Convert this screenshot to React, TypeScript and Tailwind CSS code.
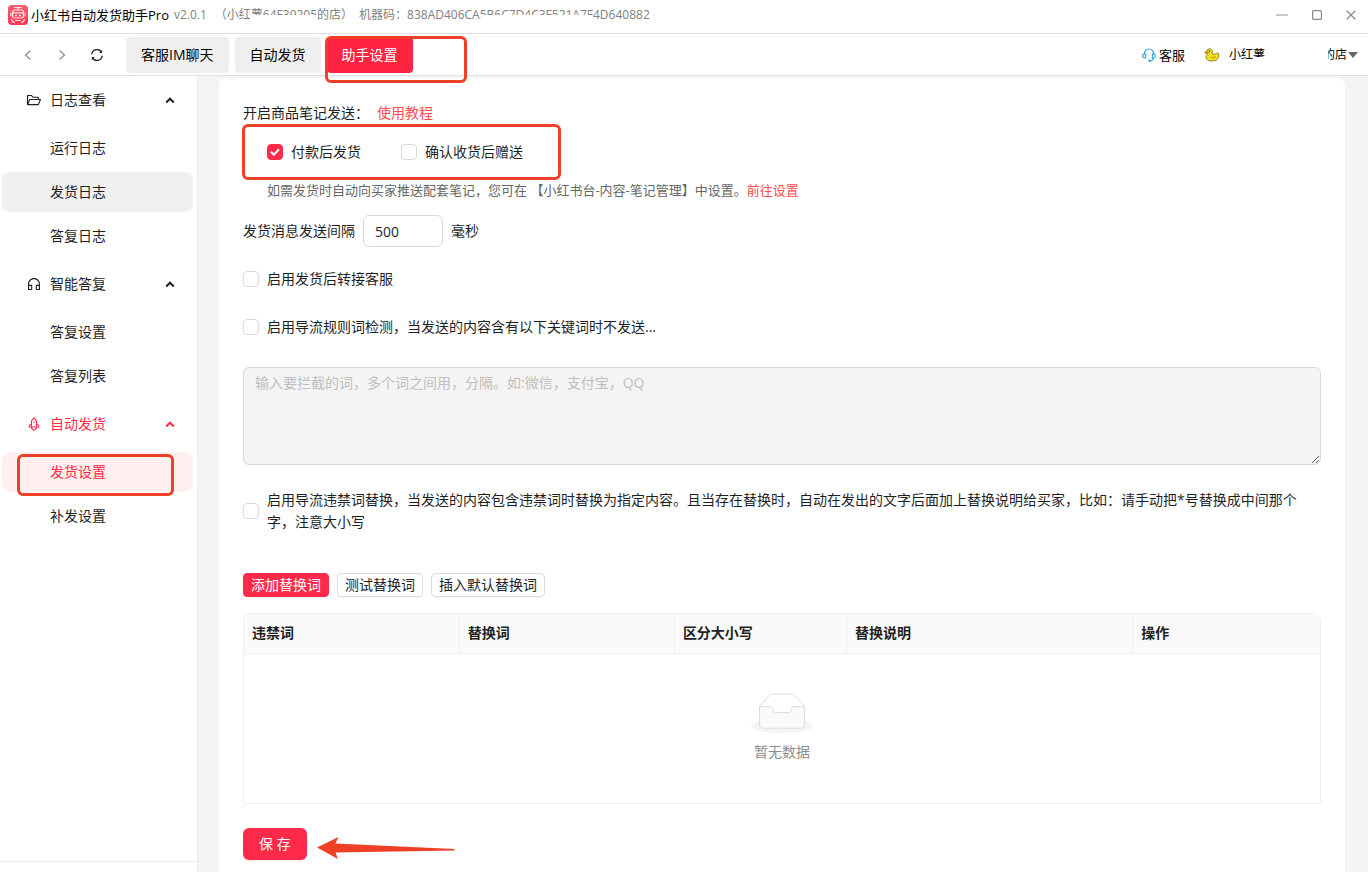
import React, { useState } from "react";
import {
  AiOutlineCustomerService,
  AiOutlineFolderOpen,
  AiOutlineRocket,
} from "react-icons/ai";

const menu = [
  {
    title: "日志查看",
    icon: AiOutlineFolderOpen,
    items: ["运行日志", "发货日志", "答复日志"],
  },
  {
    title: "智能答复",
    icon: AiOutlineCustomerService,
    items: ["答复设置", "答复列表"],
  },
  {
    title: "自动发货",
    icon: AiOutlineRocket,
    items: ["发货设置", "补发设置"],
  },
];

const columns = [
  { label: "违禁词", width: "w-[20%]" },
  { label: "替换词", width: "w-[20%]" },
  { label: "区分大小写", width: "w-[16%]" },
  { label: "替换说明", width: "w-[26.6%]" },
  { label: "操作", width: "w-[17.4%]" },
];

function itemClass(label: string) {
  if (label === "发货设置") return "bg-[#fff0ef] text-[#ff2a4a]";
  if (label === "发货日志") return "bg-[#f0f0f0]";
  return "hover:bg-[#f5f5f5]";
}

function Logo() {
  return (
    <svg width="20" height="20" viewBox="0 0 20 20" aria-hidden="true">
      <defs>
        <linearGradient id="logo-bg" x1="0" y1="0" x2="0" y2="1">
          <stop offset="0" stopColor="#ff5e70" />
          <stop offset="1" stopColor="#fb3350" />
        </linearGradient>
      </defs>
      <rect width="20" height="20" rx="4" fill="url(#logo-bg)" />
      <g fill="none" stroke="#ffe3e6" strokeWidth="1.2" strokeLinecap="round">
        <path d="M6.500 2.500h7M10 2.500v2.500" />
        <rect x="4.600" y="5" width="10.800" height="8" rx="2" />
        <path d="M5 7.800h10M2.900 8v3M17.100 8v3" />
        <path d="M3.500 14.500c.5 1.800 1.600 2.800 3 3.200M16.500 14.500c-.5 1.800-1.600 2.800-3 3.200M7.500 15.500h5" />
      </g>
      <circle cx="8" cy="10.400" r="1" fill="#fff" />
      <circle cx="12" cy="10.400" r="1" fill="#fff" />
    </svg>
  );
}

function Duck() {
  return (
    <svg width="16" height="16" viewBox="0 0 16 16" aria-hidden="true">
      <path
        d="M3 4.200C3 2.500 4.300 1.800 5.600 1.800c1.800 0 3 1.300 2.800 3-.1 1-.6 1.500-.2 2 1.300.8 3.900.4 5.900-1.200.8 1 .9 3.600.2 5.200-.9 2.200-3.200 3.200-6.400 3.200-3.800 0-5.700-1.400-5.900-3.600-.1-1.400.6-2.300 1.700-2.900"
        fill="#f5de18"
        stroke="#857a33"
        strokeWidth=".9"
      />
      <path d="M.8 5 3 4.200l1.300 1.600-.9 1.200-2.200-.6z" fill="#f08a24" stroke="#8f6f2a" strokeWidth=".6" />
      <circle cx="5.400" cy="4.200" r=".7" fill="#3b3412" />
      <path d="M7 10c1.500 1.400 3.800 1.200 4.500-1" fill="none" stroke="#a08a18" strokeWidth="1" />
    </svg>
  );
}

function Headset() {
  return (
    <svg width="14" height="14" viewBox="0 0 14 14" fill="none" stroke="#35a4e4" strokeWidth="1.200" aria-hidden="true">
      <path d="M2.300 6.200C2.300 3.200 4.200 1 7 1s4.700 2.200 4.700 5.200" />
      <path d="M3.600 6.200H2.200C1.300 6.200.7 6.900.7 8s.6 1.800 1.500 1.800h1.400zM10.400 6.200h1.400c.9 0 1.500.7 1.500 1.800s-.6 1.800-1.500 1.800h-1.400z" />
      <path d="M11.500 10c-.3 1.800-1.500 2.800-3 2.900" />
      <circle cx="7.600" cy="12.800" r=".7" fill="#35a4e4" />
    </svg>
  );
}

function EmptyBox() {
  return (
    <svg width="64" height="40" viewBox="0 0 64 41" aria-hidden="true">
      <g transform="translate(0 1)" fill="none" fillRule="evenodd">
        <ellipse fill="#f5f5f5" cx="32" cy="33" rx="32" ry="7" />
        <g fillRule="nonzero" stroke="#d9d9d9">
          <path d="M55 12.760 44.854 1.258C44.367.474 43.656 0 42.907 0H21.093c-.749 0-1.460.474-1.947 1.257L9 12.761V22h46v-9.240z" />
          <path
            d="M41.613 15.931c0-1.605.994-2.930 2.227-2.931H55v18.137C55 33.260 53.680 35 52.050 35h-40.100C10.320 35 9 33.259 9 31.137V13h11.160c1.233 0 2.227 1.323 2.227 2.928v.022c0 1.605 1.005 2.901 2.237 2.901h14.752c1.232 0 2.237-1.308 2.237-2.913v-.007z"
            fill="#fafafa"
          />
        </g>
      </g>
    </svg>
  );
}

// red hand-marked frame laid over the part of the page it points out
function Mark({ className }: { className: string }) {
  return (
    <div
      aria-hidden="true"
      className={`pointer-events-none absolute z-10 rounded-md border-3 border-[#ee4026] ${className}`}
    />
  );
}

function Check({
  children,
  defaultChecked = false,
}: {
  children: React.ReactNode;
  defaultChecked?: boolean;
}) {
  return (
    <label className="flex cursor-pointer items-center gap-2">
      <span className="grid size-4 shrink-0">
        <input
          type="checkbox"
          defaultChecked={defaultChecked}
          className="peer col-start-1 row-start-1 size-4 appearance-none rounded border border-[#d9d9d9] bg-white checked:border-[#ff2a4a] checked:bg-[#ff2a4a]"
        />
        <svg
          viewBox="0 0 16 16"
          className="pointer-events-none col-start-1 row-start-1 hidden size-4 peer-checked:block"
          fill="none"
          stroke="#fff"
          strokeWidth="2"
          aria-hidden="true"
        >
          <path d="m3.800 7.800 3 3 5.200-5.600" />
        </svg>
      </span>
      <span>{children}</span>
    </label>
  );
}

function TitleBar() {
  return (
    <header className="flex h-[34px] shrink-0 items-center border-b border-[#e0e0e0] pr-3 pl-2 pb-1">
      <Logo />
      <h1 className="ml-[3px] text-[13px] text-black">小红书自动发货助手Pro</h1>
      <div className="ml-[5px] flex text-xs whitespace-nowrap text-[#808080]">
        <span>v2.0.1</span>
        <span className="relative ml-2">
          （小红薯64F39205的店）
          <span className="absolute top-[8px] left-[35px] h-3 w-[67px] bg-white" />
        </span>
        <span className="relative ml-[6px]">
          机器码：838AD406CA5B6C7D4C3F521A7F4D640882
          <span className="absolute top-[8px] right-[59px] h-3 w-[110px] bg-white" />
        </span>
      </div>
      <div className="ml-auto flex items-center gap-6 text-[#8a8a8a]">
        <button type="button" aria-label="最小化">
          <svg width="12" height="12" viewBox="0 0 12 12" stroke="#b0b0b0" strokeWidth="1.400">
            <path d="M0 6h12" />
          </svg>
        </button>
        <button type="button" aria-label="最大化">
          <svg width="10" height="10" viewBox="0 0 10 10" fill="none" stroke="currentColor" strokeWidth="1.200">
            <rect x=".6" y=".6" width="8.800" height="8.800" rx="1" />
          </svg>
        </button>
        <button type="button" aria-label="关闭">
          <svg width="10" height="10" viewBox="0 0 10 10" fill="none" stroke="currentColor" strokeWidth="1.300">
            <path d="m.7.700 8.600 8.600M9.300.7.700 9.300" />
          </svg>
        </button>
      </div>
    </header>
  );
}

function Toolbar() {
  return (
    <div className="flex h-[42px] shrink-0 items-center border-b border-[#e0e0e0] pr-[10px] pl-[22px] text-black">
      <div className="flex items-center gap-[22px] text-[#8c8c8c]">
        <button type="button" aria-label="后退">
          <svg width="12" height="12" viewBox="0 0 12 12" fill="none" stroke="currentColor" strokeWidth="1.200">
            <path d="M8.500 1.500 3.500 6l5 4.500" />
          </svg>
        </button>
        <button type="button" aria-label="前进">
          <svg width="12" height="12" viewBox="0 0 12 12" fill="none" stroke="currentColor" strokeWidth="1.200">
            <path d="m3.500 1.500 5 4.500-5 4.500" />
          </svg>
        </button>
        <button type="button" aria-label="刷新" className="text-[#222222]">
          <svg width="14" height="14" viewBox="0 0 14 14" fill="none" stroke="currentColor" strokeWidth="1.300">
            <path d="M1.800 6.200A5.200 5.200 0 0 1 11.700 4.600M12.200 7.800A5.200 5.200 0 0 1 2.300 9.400" />
            <path d="m12.300 2-.3 3.300-2.900-.7zM1.700 12 2 8.700l2.900.7z" fill="currentColor" stroke="none" />
          </svg>
        </button>
      </div>
      <div className="ml-[22px] flex gap-[6px]">
        <button type="button" className="h-9 rounded bg-[#efefef] px-[15px]">
          客服IM聊天
        </button>
        <button type="button" className="h-9 rounded bg-[#efefef] px-[15px]">
          自动发货
        </button>
        <div className="relative">
          <button type="button" className="h-9 rounded bg-[#ff2442] px-[15px] text-white">
            助手设置
          </button>
          <Mark className="-top-px -left-[2px] h-[47px] w-[142px]" />
        </div>
      </div>
      <div className="ml-auto flex items-center pt-[2px] text-xs">
        <a href="#" className="flex items-center gap-[3px] text-[13px]">
          <Headset />
          客服
        </a>
        <button type="button" className="ml-[19px] flex items-center">
          <Duck />
          <span className="relative ml-[9px]">
            小红薯
            <span className="absolute right-0 bottom-0 h-[6px] w-3 bg-white" />
          </span>
          <span className="relative ml-[58px] whitespace-nowrap">
            的店
            <span className="absolute top-0 left-0 h-full w-[5px] bg-white" />
          </span>
          <svg width="10" height="6" viewBox="0 0 10 6" className="ml-px" fill="#666666" aria-hidden="true">
            <path d="M0 0h10L5 6z" />
          </svg>
        </button>
      </div>
    </div>
  );
}

function Sidebar() {
  return (
    <aside className="flex w-[198px] shrink-0 flex-col border-r border-[#ececec]">
      <nav className="flex flex-1 flex-col gap-2 py-1 pr-1 pl-[2px]">
        {menu.map(({ title, icon: Icon, items }) => (
          <div key={title}>
            <button
              type="button"
              aria-expanded="true"
              className={[
                "flex h-10 w-full items-center gap-2 pr-[18px] pl-6",
                title === "自动发货" ? "text-[#ff2a4a]" : "",
              ].join(" ")}
            >
              <Icon size={16} />
              {title}
              <svg
                width="10"
                height="10"
                viewBox="0 0 10 10"
                className="ml-auto"
                fill="none"
                stroke="currentColor"
                strokeWidth="2"
                aria-hidden="true"
              >
                <path d="M1.200 7.500 5 3.700l3.800 3.800" />
              </svg>
            </button>
            <div className="mt-2 flex flex-col gap-1">
              {items.map((label) => (
                <a
                  key={label}
                  href="#"
                  className={`relative flex h-10 items-center rounded-lg pl-12 ${itemClass(label)}`}
                >
                  {label}
                  {label === "发货设置" && (
                    <Mark className="top-[2px] left-[15px] h-[42px] w-[157px]" />
                  )}
                </a>
              ))}
            </div>
          </div>
        ))}
      </nav>
      <div className="h-[11px] border-t border-[#ececec]" />
    </aside>
  );
}

export default function App() {
  const [interval, setIntervalMs] = useState("500");
  const smallButton = "h-6 rounded border px-[7px] shadow-[0_2px_0_rgba(0,0,0,0.02)]";

  return (
    <div
      lang="zh-CN"
      className="flex h-screen flex-col overflow-hidden bg-white font-['Open_Sans','Noto_Sans_CJK_SC',sans-serif] text-sm leading-[22px] text-[#1f1f1f]"
    >
      <TitleBar />
      <Toolbar />
      <div className="flex min-h-0 flex-1">
        <Sidebar />
        <main className="min-w-0 flex-1 overflow-hidden bg-[#f4f4f4] pt-[2px] pr-[23px] pl-[21px]">
          <div className="min-h-full rounded-lg bg-white p-6">
            <p className="flex gap-2">
              开启商品笔记发送：
              <a href="#" className="text-[#ff4d4f]">
                使用教程
              </a>
            </p>
            <div className="relative mt-4 flex h-6 items-center gap-10 pl-6">
              <Check defaultChecked>付款后发货</Check>
              <Check>确认收货后赠送</Check>
              <Mark className="-top-4 -left-px h-14 w-[319px]" />
            </div>
            <p className="mt-[15px] pl-6 text-[13px] leading-[22px] text-[#666666]">
              如需发货时自动向买家推送配套笔记，您可在 【小红书台-内容-笔记管理】中设置。
              <a href="#" className="text-[#ff4d4f]">
                前往设置
              </a>
            </p>
            <label className="mt-[14px] flex items-center gap-2">
              发货消息发送间隔
              <input
                type="text"
                value={interval}
                onChange={(e) => setIntervalMs(e.target.value)}
                className="h-8 w-20 rounded-md border border-[#d9d9d9] px-[11px]"
              />
              毫秒
            </label>
            <div className="mt-4 flex h-8 items-center">
              <Check>启用发货后转接客服</Check>
            </div>
            <div className="mt-4 flex h-8 items-center">
              <Check>启用导流规则词检测，当发送的内容含有以下关键词时不发送...</Check>
            </div>
            <textarea
              aria-label="拦截词"
              placeholder="输入要拦截的词，多个词之间用，分隔。如:微信，支付宝，QQ"
              className="mt-6 block h-[98px] w-full rounded-md border border-[#d9d9d9] bg-[#f4f4f4] px-[11px] py-1 placeholder:text-[#bfbfbf]"
            />
            <div className="mt-6 pr-2">
              <Check>
                启用导流违禁词替换，当发送的内容包含违禁词时替换为指定内容。且当存在替换时，自动在发出的文字后面加上替换说明给买家，比如：请手动把*号替换成中间那个字，注意大小写
              </Check>
            </div>
            <div className="mt-10 flex gap-2">
              <button type="button" className={`${smallButton} border-[#ff2a4a] bg-[#ff2a4a] text-white`}>
                添加替换词
              </button>
              <button type="button" className={`${smallButton} border-[#d9d9d9]`}>
                测试替换词
              </button>
              <button type="button" className={`${smallButton} border-[#d9d9d9]`}>
                插入默认替换词
              </button>
            </div>
            <div className="mt-4 overflow-hidden rounded-t-lg border border-[#f0f0f0]">
              <table className="w-full table-fixed border-collapse">
                <thead>
                  <tr className="h-[39px] border-b border-[#f0f0f0] bg-[#fafafa] text-left">
                    {columns.map((c) => (
                      <th
                        key={c.label}
                        className={`${c.width} border-r border-[#f0f0f0] px-2 font-semibold last:border-r-0`}
                      >
                        {c.label}
                      </th>
                    ))}
                  </tr>
                </thead>
                <tbody>
                  <tr>
                    <td colSpan={5} className="h-[150px] text-center text-[#8c8c8c]">
                      <div className="flex flex-col items-center gap-2">
                        <EmptyBox />
                        暂无数据
                      </div>
                    </td>
                  </tr>
                </tbody>
              </table>
            </div>
            <div className="mt-6 flex items-center gap-[10px]">
              <button
                type="button"
                className="h-8 rounded-md bg-[#ff2a4a] px-4 text-white shadow-[0_2px_0_rgba(255,38,5,0.06)]"
              >
                保 存
              </button>
              <svg width="138" height="22" viewBox="0 0 138 22" className="mt-2" fill="#ee4026" aria-hidden="true">
                <path d="M0 10.500 21.500 0l-3 6.500L137.500 12v1.400L18.500 15.500l2.500 6.500z" />
              </svg>
            </div>
          </div>
        </main>
      </div>
    </div>
  );
}
